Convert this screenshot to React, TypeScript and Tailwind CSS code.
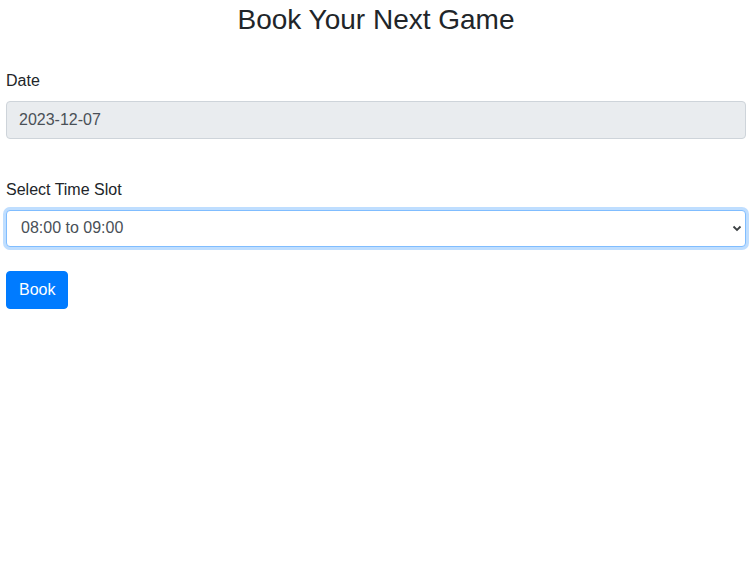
import { useState } from "react";

// Available time slots
const slots: string[] = [
    "08:00 to 09:00",
    "09:00 to 10:00",
    "10:00 to 11:00",
    "11:00 to 12:00",
];

export default function App() {
    const [slot, setSlot] = useState(slots[0]);

    return (
        <div className="min-h-screen bg-white pl-[6px] pr-[5px] text-[#212529] font-['Liberation_Sans',Arial,sans-serif]">
            <h3 className="pt-[3px] text-center text-[28px] leading-[1.2] font-normal">
                Book Your Next Game
            </h3>

            <form className="mt-[32px]" onSubmit={(e) => e.preventDefault()}>
                <div>
                    <label className="block mb-[8px] text-base leading-6">
                        Date
                    </label>
                    <input
                        type="text"
                        readOnly
                        value="2023-12-07"
                        className="block w-full h-[38px] px-[12px] text-base text-[#495057] bg-[#e9ecef] border border-[#ced4da] rounded-[4px] outline-none"
                    />
                </div>

                <div className="mt-[39px]">
                    <label className="block mb-[8px] text-base leading-6">
                        Select Time Slot
                    </label>
                    <div className="relative">
                        <select
                            value={slot}
                            onChange={(e) => setSlot(e.target.value)}
                            className="block w-full h-[37px] pl-[14px] pr-8 text-base text-[#495057] bg-white border border-[#80bdff] rounded-[4px] outline-none appearance-none shadow-[0_0_0_3px_rgba(0,123,255,0.25)]"
                        >
                            {slots.map((s) => (
                                <option key={s} value={s}>
                                    {s}
                                </option>
                            ))}
                        </select>
                        <svg
                            className="absolute right-[4px] top-1/2 -translate-y-1/2 pointer-events-none"
                            width="10"
                            height="10"
                            viewBox="0 0 10 10"
                        >
                            <path
                                d="M1.5 3.5 L5 7 L8.5 3.5"
                                fill="none"
                                stroke="#3c4043"
                                strokeWidth="1.8"
                            />
                        </svg>
                    </div>
                </div>

                <button
                    type="submit"
                    className="mt-[24px] h-[38px] px-[12px] text-base text-white bg-[#007bff] border border-[#007bff] rounded-[4px]"
                >
                    Book
                </button>
            </form>
        </div>
    );
}
